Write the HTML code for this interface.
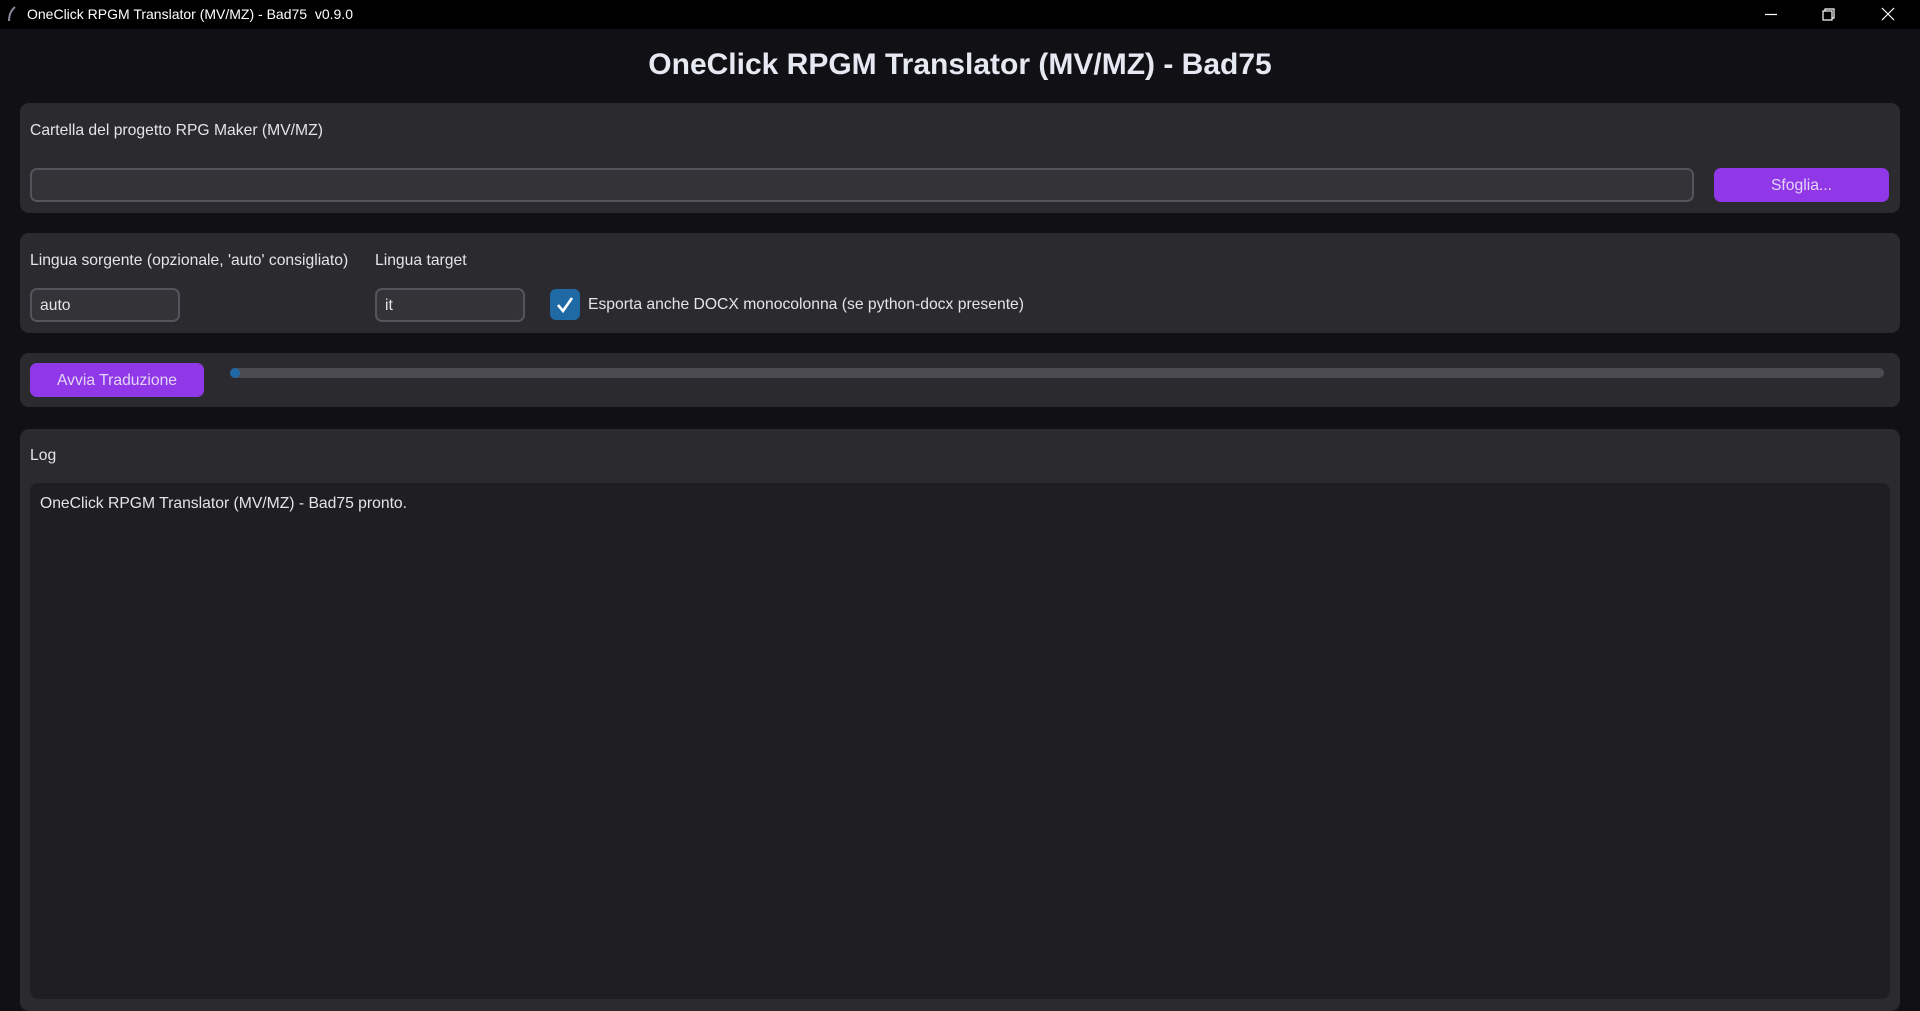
<!DOCTYPE html>
<html><head><meta charset="utf-8"><style>
*{box-sizing:border-box;margin:0;padding:0}
body{width:1920px;height:1011px;background:#111015;font-family:"Liberation Sans",sans-serif;color:#e4e4e8;position:relative;overflow:hidden;font-size:15.7px}
.a{position:absolute}
.tb{left:0;top:0;width:1920px;height:29px;background:#000}
.frame{background:#2b2a2e;border-radius:9px}
.entry{background:#343338;border:2px solid #55545b;border-radius:7px}
.btn{background:#9038e8;border-radius:7px;color:#e2d4f5;text-align:center}
.t{white-space:nowrap}
</style></head><body>
<div class="a tb"></div>
<svg class="a" style="left:7px;top:6px" width="10" height="16"><path d="M8 1 Q2 6 2 15" stroke="#889" stroke-width="2" fill="none"/></svg>
<div class="a t" style="left:27px;top:6px;font-size:14px;color:#fff">OneClick RPGM Translator (MV/MZ) - Bad75&nbsp; v0.9.0</div>
<svg class="a" style="left:1760px;top:6px" width="160" height="18" fill="none" stroke="#fff" stroke-width="1.2">
<path d="M5 8.5h12"/>
<rect x="63" y="5" width="9" height="9"/><path d="M65 5V3h9v9h-2"/>
<path d="M122 2l12 12M134 2l-12 12"/>
</svg>
<div class="a t" style="left:0;width:1920px;top:48px;text-align:center;font-size:30px;font-weight:bold;color:#e6e8f2">OneClick RPGM Translator (MV/MZ) - Bad75</div>

<div class="a frame" style="left:20px;top:103px;width:1880px;height:110px"></div>
<div class="a t" style="left:30px;top:122px">Cartella del progetto RPG Maker (MV/MZ)</div>
<div class="a entry" style="left:30px;top:168px;width:1664px;height:34px"></div>
<div class="a btn" style="left:1714px;top:168px;width:175px;height:34px;line-height:35px">Sfoglia...</div>

<div class="a frame" style="left:20px;top:233px;width:1880px;height:100px"></div>
<div class="a t" style="left:30px;top:252px">Lingua sorgente (opzionale, 'auto' consigliato)</div>
<div class="a t" style="left:375px;top:252px">Lingua target</div>
<div class="a entry" style="left:30px;top:288px;width:150px;height:34px;padding:7px 8px">auto</div>
<div class="a entry" style="left:375px;top:288px;width:150px;height:34px;padding:7px 8px">it</div>
<div class="a" style="left:550px;top:289px;width:30px;height:31px;background:#1f6aa5;border-radius:6px"></div>
<svg class="a" style="left:550px;top:289px" width="30" height="31"><path d="M8 16l5 6 9-13" stroke="#fff" stroke-width="2.6" fill="none"/></svg>
<div class="a t" style="left:588px;top:296px">Esporta anche DOCX monocolonna (se python-docx presente)</div>

<div class="a frame" style="left:20px;top:353px;width:1880px;height:54px"></div>
<div class="a btn" style="left:30px;top:363px;width:174px;height:34px;line-height:35px">Avvia Traduzione</div>
<div class="a" style="left:230px;top:368px;width:1654px;height:10px;background:#4a4a50;border-radius:5px"></div>
<div class="a" style="left:230px;top:368px;width:10px;height:10px;background:#1f6aa5;border-radius:5px"></div>

<div class="a frame" style="left:20px;top:429px;width:1880px;height:582px"></div>
<div class="a t" style="left:30px;top:447px">Log</div>
<div class="a" style="left:30px;top:483px;width:1860px;height:516px;background:#1f1e22;border-radius:8px"></div>
<div class="a t" style="left:40px;top:495px">OneClick RPGM Translator (MV/MZ) - Bad75 pronto.</div>
</body></html>
